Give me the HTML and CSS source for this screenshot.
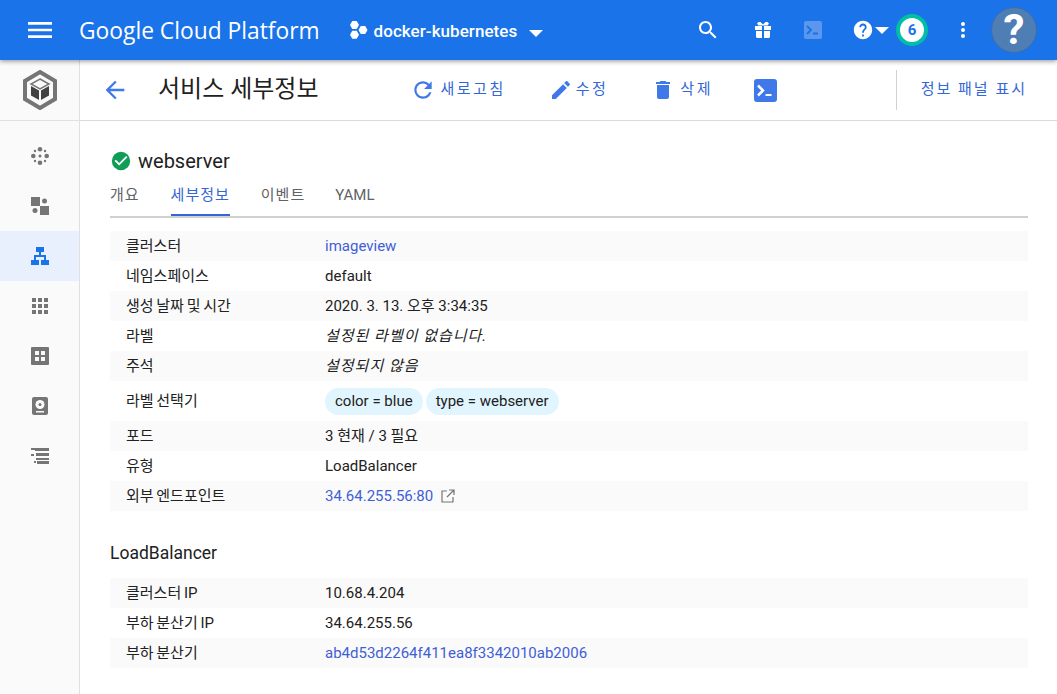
FILE: index.html
```html
<!DOCTYPE html>
<html lang="ko">
<head>
    <meta charset="UTF-8">
    <title>서비스 세부정보 - Google Cloud Platform</title>
    <link rel="stylesheet" href="styles.css">
</head>
<body>
    <header class="topbar">
        <svg class="menu-icon" viewBox="0 0 24 24" width="32" height="32"><path d="M3 18h18v-2H3v2zm0-5h18v-2H3v2zm0-7v2h18V6H3z"/></svg>
        <span class="brand">Google Cloud Platform</span>
        <svg class="project-icon" viewBox="0 0 20 20" width="20" height="20">
            <polygon points="1,5 3.300,1 7.700,1 10,5 7.700,9 3.300,9"/>
            <polygon points="9.500,10 11.800,6 16.200,6 18.500,10 16.200,14 11.800,14"/>
            <polygon points="1,14.800 3.300,10.800 7.700,10.800 10,14.800 7.700,18.800 3.300,18.800"/>
        </svg>
        <span class="project-name">docker-kubernetes</span>
        <span class="caret project-caret"></span>
        <div class="top-actions">
            <svg class="top-icon" viewBox="0 0 24 24" width="24" height="24"><path d="M15.500 14h-.79l-.28-.27C15.410 12.590 16 11.110 16 9.500 16 5.910 13.090 3 9.500 3S3 5.910 3 9.500 5.910 16 9.500 16c1.610 0 3.090-.59 4.230-1.570l.27.28v.79l5 4.990L20.490 19l-4.990-5zm-6 0C7.010 14 5 11.990 5 9.500S7.010 5 9.500 5 14 7.010 14 9.500 11.990 14 9.500 14z"/></svg>
            <svg class="top-icon gift" viewBox="0 0 18 18" width="18" height="18"><path d="M1 5h7v4H1zM10 5h7v4h-7zM2 10h6v7H3.500A1.500 1.500 0 0 1 2 15.500zM10 10h6v5.500a1.500 1.500 0 0 1-1.500 1.500H10zM4.500 1h2L9 3.500 11.500 1h2L15 2.500 13.500 4.500h-9L3 2.500z"/></svg>
            <svg class="top-icon shell-faded" viewBox="0 0 18 18" width="18" height="18"><rect width="18" height="18" rx="2" fill="#5c97ee"/><path d="M3 5 7 9 3 13" fill="none" stroke="#1a73e8" stroke-width="2"/><rect x="9" y="11.500" width="5" height="2" fill="#1a73e8"/></svg>
            <svg class="top-icon help" viewBox="0 0 24 24" width="22" height="22"><path d="M12 2C6.480 2 2 6.480 2 12s4.480 10 10 10 10-4.480 10-10S17.520 2 12 2zm1 17h-2v-2h2v2zm2.070-7.750l-.9.92C13.450 12.900 13 13.500 13 15h-2v-.5c0-1.100.45-2.100 1.170-2.830l1.240-1.260c.37-.36.59-.86.59-1.410 0-1.100-.9-2-2-2s-2 .9-2 2H8c0-2.210 1.790-4 4-4s4 1.790 4 4c0 .88-.36 1.680-.93 2.250z"/></svg>
            <span class="caret help-caret"></span>
            <span class="badge">6</span>
            <svg class="top-icon dots" viewBox="0 0 24 24" width="24" height="24"><circle cx="12" cy="6" r="2"/><circle cx="12" cy="12" r="2"/><circle cx="12" cy="18" r="2"/></svg>
            <span class="avatar">?</span>
        </div>
    </header>

    <div class="main">
        <nav class="sidebar">
            <div class="side-logo">
                <svg viewBox="0 0 36 40" width="36" height="40">
                    <polygon points="18,2 33,11 33,29 18,38 3,29 3,11" fill="none" stroke="#757575" stroke-width="4"/>
                    <polygon points="18,9 27,14 18,19 9,14" fill="none" stroke="#757575" stroke-width="1.500"/>
                    <polygon points="9,16 17,20.500 17,30 9,25.500" fill="#424242"/>
                    <polygon points="27,16 19,20.500 19,30 27,25.500" fill="#424242"/>
                </svg>
            </div>
            <div class="side-item">
                <svg viewBox="0 0 18 18" width="18" height="18" fill="#757575">
                    <circle cx="9" cy="2.300" r="2.300"/><circle cx="9" cy="15.700" r="2.300"/><circle cx="2.300" cy="9" r="2.300"/><circle cx="15.700" cy="9" r="2.300"/>
                    <circle cx="9" cy="9" r="1.500"/><circle cx="4" cy="4" r="1.200"/><circle cx="14" cy="4" r="1.200"/><circle cx="4" cy="14" r="1.200"/><circle cx="14" cy="14" r="1.200"/>
                </svg>
            </div>
            <div class="side-item">
                <svg viewBox="0 0 18 18" width="18" height="18" fill="#757575">
                    <rect x="0" y="0" width="9" height="9"/><rect x="9" y="9" width="9" height="9"/><circle cx="13.500" cy="4" r="2.500"/><circle cx="4" cy="13.500" r="2.500"/>
                </svg>
            </div>
            <div class="side-item active">
                <svg viewBox="0 0 18 18" width="18" height="18" fill="#1a73e8">
                    <rect x="5" y="0" width="8" height="5"/><rect x="0" y="13" width="8" height="5"/><rect x="10" y="13" width="8" height="5"/>
                    <path d="M8 5h2v3h5v5h-2v-3H5v3H3V8h5z"/>
                </svg>
            </div>
            <div class="side-item">
                <svg viewBox="0 0 16 16" width="16" height="16" fill="#757575">
                    <rect width="4" height="4"/><rect x="6" width="4" height="4"/><rect x="12" width="4" height="4"/>
                    <rect y="6" width="4" height="4"/><rect x="6" y="6" width="4" height="4"/><rect x="12" y="6" width="4" height="4"/>
                    <rect y="12" width="4" height="4"/><rect x="6" y="12" width="4" height="4"/><rect x="12" y="12" width="4" height="4"/>
                </svg>
            </div>
            <div class="side-item">
                <svg viewBox="0 0 18 18" width="18" height="18">
                    <rect width="18" height="18" rx="1" fill="#757575"/>
                    <rect x="4" y="4" width="4" height="4" fill="#fafafa"/><rect x="10" y="4" width="4" height="4" fill="#fafafa"/><rect x="4" y="10" width="4" height="4" fill="#fafafa"/><rect x="10" y="10" width="4" height="4" fill="#fafafa"/>
                </svg>
            </div>
            <div class="side-item">
                <svg viewBox="0 0 16 18" width="16" height="18">
                    <rect width="16" height="18" rx="2" fill="#757575"/>
                    <circle cx="8" cy="7.500" r="4.500" fill="#fafafa"/><circle cx="8" cy="7.500" r="1.500" fill="#757575"/><rect x="4" y="14" width="8" height="1.500" fill="#fafafa"/>
                </svg>
            </div>
            <div class="side-item">
                <svg viewBox="0 0 18 16" width="18" height="16" fill="#757575">
                    <rect x="0" y="0" width="5" height="2"/><rect x="4" y="0" width="14" height="3"/>
                    <rect x="5" y="5" width="13" height="3"/><rect x="0" y="6" width="3" height="2"/>
                    <rect x="5" y="10" width="13" height="2"/><rect x="3" y="13" width="2" height="2"/><rect x="6" y="13" width="12" height="3"/>
                </svg>
            </div>
        </nav>

        <div class="content">
            <div class="toolbar">
                <svg class="back" viewBox="0 0 24 24" width="28" height="28"><path d="M20 11H7.830l5.590-5.590L12 4l-8 8 8 8 1.410-1.410L7.830 13H20v-2z"/></svg>
                <h1 class="page-title">서비스 세부정보</h1>
                <a class="tool refresh"><svg viewBox="0 0 24 24" width="26" height="26"><path d="M17.650 6.350C16.200 4.900 14.210 4 12 4c-4.420 0-7.990 3.580-7.990 8s3.570 8 7.990 8c3.730 0 6.840-2.550 7.730-6h-2.080c-.82 2.330-3.040 4-5.650 4-3.310 0-6-2.690-6-6s2.690-6 6-6c1.660 0 3.140.69 4.220 1.780L13 11h7V4l-2.350 2.350z"/></svg><span class="tool-label">새로고침</span></a>
                <a class="tool edit"><svg viewBox="0 0 24 24" width="24" height="24"><path d="M3 17.250V21h3.750L17.810 9.940l-3.750-3.750L3 17.250zM20.710 7.040c.39-.39.39-1.020 0-1.410l-2.340-2.340c-.39-.39-1.020-.39-1.410 0l-1.830 1.830 3.750 3.750 1.830-1.830z"/></svg><span class="tool-label">수정</span></a>
                <a class="tool remove"><svg viewBox="0 0 24 24" width="24" height="24"><path d="M6 19c0 1.100.9 2 2 2h8c1.100 0 2-.9 2-2V7H6v12zM19 4h-3.500l-1-1h-5l-1 1H5v2h14V4z"/></svg><span class="tool-label">삭제</span></a>
                <svg class="shell" viewBox="0 0 23 23" width="23" height="23"><rect width="23" height="23" rx="3" fill="#3f78e8"/><path d="M4 6.500 9 11.500 4 16.500" fill="none" stroke="#fff" stroke-width="2.500"/><rect x="11.500" y="15" width="6" height="2" fill="#fff"/></svg>
                <a class="panel-toggle">정보 패널 표시</a>
            </div>

            <div class="details">
                <div class="resource-name">
                    <svg viewBox="0 0 24 24" width="22" height="22"><circle cx="12" cy="12" r="10" fill="#0f9d58"/><path d="M10 17l-5-5 1.410-1.410L10 14.170l7.590-7.590L19 8l-9 9z" fill="#fff"/></svg>
                    <span>webserver</span>
                </div>
                <div class="tabs">
                    <a class="tab">개요</a>
                    <a class="tab selected">세부정보</a>
                    <a class="tab">이벤트</a>
                    <a class="tab tab-latin">YAML</a>
                </div>

                <div class="info">
                    <div class="row"><span class="key">클러스터</span><a class="link">imageview</a></div>
                    <div class="row"><span class="key">네임스페이스</span><span>default</span></div>
                    <div class="row"><span class="key">생성 날짜 및 시간</span><span>2020. 3. 13. 오후 3:34:35</span></div>
                    <div class="row"><span class="key">라벨</span><em>설정된 라벨이 없습니다.</em></div>
                    <div class="row"><span class="key">주석</span><em>설정되지 않음</em></div>
                    <div class="row tall"><span class="key">라벨 선택기</span><span class="chips"><span class="chip">color = blue</span><span class="chip">type = webserver</span></span></div>
                    <div class="row"><span class="key">포드</span><span>3 현재 / 3 필요</span></div>
                    <div class="row"><span class="key">유형</span><span>LoadBalancer</span></div>
                    <div class="row"><span class="key">외부 엔드포인트</span><a class="link">34.64.255.56:80</a>
                        <svg class="external" viewBox="0 0 14 14" width="14" height="14"><path d="M6 2H1v11h11V8M8 1h5v5M13 1 6 8" fill="none" stroke="#757575" stroke-width="1.200"/></svg>
                    </div>
                </div>

                <h2 class="section-title">LoadBalancer</h2>
                <div class="info">
                    <div class="row"><span class="key">클러스터 IP</span><span>10.68.4.204</span></div>
                    <div class="row"><span class="key">부하 분산기 IP</span><span>34.64.255.56</span></div>
                    <div class="row"><span class="key">부하 분산기</span><a class="link">ab4d53d2264f411ea8f3342010ab2006</a></div>
                </div>
            </div>
        </div>
    </div>
</body>
</html>
```

FILE: styles.css
```css
* {
    box-sizing: border-box;
}

html, body {
    height: 100%;
}

body {
    margin: 0;
    overflow: hidden;
    font-family: Roboto, "Noto Sans CJK KR", sans-serif;
    font-size: 15px;
    line-height: 20px;
    color: #212121;
    background-color: #fff;
}

/* top bar */
.topbar {
    position: relative;
    z-index: 2;
    display: flex;
    align-items: center;
    height: 60px;
    background-color: #1a73e8;
    color: #fff;
    fill: #fff;
    box-shadow: 0 1px 5px rgba(0, 0, 0, 0.45);
}

.menu-icon {
    margin-left: 24px;
}

.brand {
    margin-left: 23px;
    margin-top: 2px;
    font-family: "Open Sans", sans-serif;
    font-size: 22.800px;
    white-space: nowrap;
}

.project-icon {
    margin-left: 29px;
}

.project-name {
    margin-left: 5px;
    margin-top: 2px;
    font-size: 17px;
    font-weight: 500;
    letter-spacing: 0.05px;
    white-space: nowrap;
}

.caret {
    width: 0;
    height: 0;
    border-left: 7px solid transparent;
    border-right: 7px solid transparent;
    border-top: 7px solid #fff;
}

.project-caret {
    margin-left: 12px;
    margin-top: 6px;
}

.top-actions {
    display: flex;
    align-items: center;
    margin-left: auto;
}

.gift {
    margin-left: 34px;
}

.shell-faded {
    margin-left: 32px;
}

.help {
    margin-left: 30px;
}

.help-caret {
    margin-left: 1px;
    margin-right: 1px;
    margin-top: 1px;
}

.badge {
    display: flex;
    align-items: center;
    justify-content: center;
    width: 32px;
    height: 32px;
    margin-left: 6px;
    border: 4px solid #00bfa5;
    border-radius: 50%;
    background-color: #fff;
    color: #1a73e8;
    font-size: 15px;
    font-weight: 700;
}

.dots {
    margin-left: 23px;
}

.avatar {
    display: flex;
    align-items: center;
    justify-content: center;
    width: 46px;
    height: 46px;
    margin-left: 16px;
    margin-right: 20px;
    border: 1px solid #3d6ea8;
    border-radius: 50%;
    background-color: #4f7eb5;
    color: #fff;
    font-size: 42px;
    font-weight: 700;
}

/* page body */
.main {
    display: flex;
    height: 634px;
}

.sidebar {
    flex: none;
    width: 80px;
    background-color: #fafafa;
    border-right: 1px solid #e0e0e0;
}

.side-logo {
    display: flex;
    align-items: center;
    justify-content: center;
    height: 61px;
    margin-bottom: 10px;
    border-bottom: 1px solid #e0e0e0;
}

.side-item {
    display: flex;
    align-items: center;
    justify-content: center;
    height: 50px;
}

.side-item.active {
    background-color: #e8f0fe;
}

.content {
    flex: 1;
    min-width: 0;
}

.toolbar {
    display: flex;
    align-items: center;
    height: 61px;
    border-bottom: 1px solid #dadada;
    color: #3367d6;
    fill: #3f78e8;
}

.back {
    margin-left: 21px;
}

.page-title {
    margin: 0 0 2px 29px;
    font-size: 24px;
    line-height: 30px;
    font-weight: 400;
    color: #212121;
    white-space: nowrap;
}

.tool {
    display: flex;
    align-items: center;
    white-space: nowrap;
}

.tool-label {
    margin-bottom: 2px;
    letter-spacing: 2.500px;
}

.refresh {
    margin-left: 91px;
    gap: 5px;
}

.edit {
    margin-left: 43px;
    gap: 3px;
}

.remove {
    margin-left: 43px;
    gap: 5px;
}

.shell {
    margin-left: 41px;
}

.panel-toggle {
    display: flex;
    align-items: center;
    height: 40px;
    margin-left: auto;
    margin-right: 30px;
    padding-left: 24px;
    padding-bottom: 2px;
    border-left: 1px solid #d0d0d0;
    letter-spacing: 2px;
    white-space: nowrap;
}

.details {
    padding: 0 29px 0 30px;
}

.resource-name {
    display: flex;
    align-items: center;
    gap: 6px;
    height: 26px;
    margin-top: 27px;
    font-size: 20px;
    color: #212121;
}

.tabs {
    display: flex;
    height: 38px;
    margin-top: 6px;
    border-bottom: 2px solid #d0d0d0;
}

.tab {
    height: 36px;
    margin-right: 31px;
    padding-top: 5px;
    letter-spacing: 1px;
    color: #5f6368;
    white-space: nowrap;
}

.tab-latin {
    margin-left: -1px;
    letter-spacing: 0;
}

.tab.selected {
    color: #3367d6;
    border-bottom: 2px solid #3367d6;
}

.info {
    margin-top: 13px;
}

.row {
    display: flex;
    align-items: center;
    height: 30px;
}

.row:nth-child(odd) {
    background-color: #fafafa;
}

.row.tall {
    height: 40px;
}

.key {
    flex: none;
    width: 215px;
    padding-left: 16px;
    word-spacing: -1px;
}

.link {
    color: #3f5fd6;
}

em {
    font-style: italic;
    letter-spacing: 1px;
}

.chips {
    display: flex;
    gap: 3px;
}

.chip {
    padding: 0 10px;
    height: 27px;
    line-height: 27px;
    border-radius: 14px;
    background-color: #e1f5fe;
}

.external {
    margin-left: 8px;
}

.section-title {
    margin: 32px 0 0;
    font-size: 17.500px;
    font-weight: 400;
    line-height: 20px;
    color: #212121;
}

.section-title + .info {
    margin-top: 15px;
}
```
